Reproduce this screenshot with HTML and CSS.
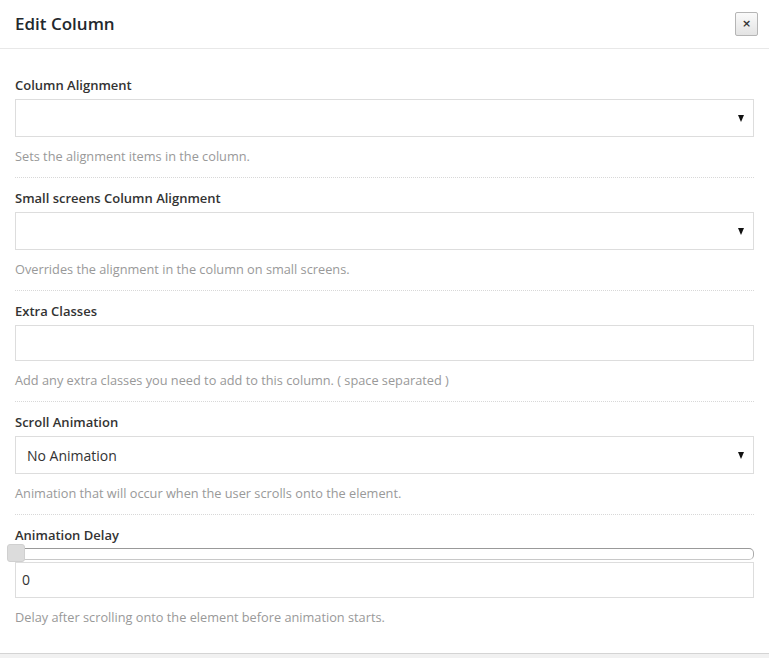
FILE: index.html
```html
<!DOCTYPE html>
<html>
<head>
<meta charset="utf-8">
<link rel="stylesheet" href="styles.css">
</head>
<body>
<div class="modal">
  <header class="modal-header">
    <h1 class="modal-title">Edit Column</h1>
    <button class="close-btn" type="button">×</button>
  </header>
  <main class="modal-body">
    <section class="field">
      <label class="field-label">Column Alignment</label>
      <div class="select"><span class="select-value"></span><span class="caret"></span></div>
      <p class="help">Sets the alignment items in the column.</p>
    </section>
    <section class="field">
      <label class="field-label">Small screens Column Alignment</label>
      <div class="select"><span class="select-value"></span><span class="caret"></span></div>
      <p class="help">Overrides the alignment in the column on small screens.</p>
    </section>
    <section class="field">
      <label class="field-label">Extra Classes</label>
      <div class="input"></div>
      <p class="help">Add any extra classes you need to add to this column. ( space separated )</p>
    </section>
    <section class="field">
      <label class="field-label">Scroll Animation</label>
      <div class="select"><span class="select-value">No Animation</span><span class="caret"></span></div>
      <p class="help">Animation that will occur when the user scrolls onto the element.</p>
    </section>
    <section class="field last">
      <label class="field-label">Animation Delay</label>
      <div class="slider"><div class="track"></div><div class="thumb"></div></div>
      <div class="input number">0</div>
      <p class="help">Delay after scrolling onto the element before animation starts.</p>
    </section>
  </main>
  <footer class="modal-footer"></footer>
</div>
</body>
</html>
```
FILE: styles.css
```css
* { box-sizing: border-box; }
html, body { margin: 0; padding: 0; background: #fff; }
body { font-family: "Open Sans", "Noto Sans", sans-serif; color: #333; }
.modal { width: 769px; height: 658px; display: flex; flex-direction: column; overflow: hidden; }
.modal-header { height: 49px; flex: none; display: flex; align-items: center; justify-content: space-between; padding: 0 11px 0 15px; border-bottom: 1px solid #e8e8e8; }
.modal-title { margin: 0; font-size: 17px; font-weight: 600; color: #23282d; line-height: 24px; }
.close-btn { width: 23px; height: 24px; padding: 0; margin-top: -1px; border: 1px solid #b5b5b5; border-radius: 2px; background: linear-gradient(#fafafa, #e3e3e3); font-family: "DejaVu Sans", sans-serif; font-size: 11px; line-height: 20px; color: #333; font-weight: bold; }
.modal-body { flex: 1; padding: 16px 15px 0; }
.field { padding: 11px 0 12px; border-bottom: 1px dotted #d8d8d8; }
.field.last { border-bottom: none; }
.field-label { display: block; font-size: 13px; font-weight: 600; line-height: 18px; color: #333; margin-bottom: 5px; }
.select { height: 38px; border: 1px solid #ddd; display: flex; align-items: center; justify-content: space-between; padding: 0 9px 0 11px; font-size: 14px; color: #333; }
.caret { width: 0; height: 0; border-left: 3.5px solid transparent; border-right: 3.5px solid transparent; border-top: 7px solid #111; margin-top: 1px; }
.input { height: 36px; border: 1px solid #ddd; padding: 0 6px; font-size: 14px; line-height: 34px; color: #333; }
.help { margin: 10px 0 0; font-size: 12.75px; line-height: 18px; color: #999; }
.slider { position: relative; height: 18px; margin-top: -5px; }
.track { position: absolute; left: 0; right: 0; top: 4px; height: 12px; border: 1px solid #aaa; border-top-color: #999; border-bottom-color: #c8c8c8; border-radius: 0 5px 5px 0; background: #fff; }
.thumb { position: absolute; left: -8px; top: 0; width: 18px; height: 18px; border: 1px solid #d0d0d0; border-radius: 3px; background: #dcdcdc; }
.number { margin-top: 0; }
.modal-footer { height: 5px; flex: none; border-top: 1px solid #d4d4d4; background: #f1f1f1; }
```
